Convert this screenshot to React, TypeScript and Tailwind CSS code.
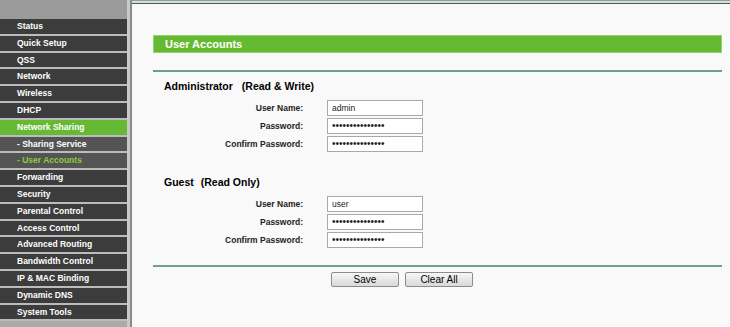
const menu = [
  { label: 'Status' },
  { label: 'Quick Setup' },
  { label: 'QSS' },
  { label: 'Network' },
  { label: 'Wireless' },
  { label: 'DHCP' },
  { label: 'Network Sharing', active: true },
  { label: '- Sharing Service', sub: true },
  { label: '- User Accounts', sub: true, current: true },
  { label: 'Forwarding' },
  { label: 'Security' },
  { label: 'Parental Control' },
  { label: 'Access Control' },
  { label: 'Advanced Routing' },
  { label: 'Bandwidth Control' },
  { label: 'IP & MAC Binding' },
  { label: 'Dynamic DNS' },
  { label: 'System Tools' },
];

const DOTS = '•••••••••••••••';

function Field({ label, value, secret }: { label: string; value: string; secret?: boolean }) {
  return (
    <div className="flex h-[16px] items-center">
      <div className="w-[150px] text-right text-[8.5px] font-bold text-[#222]">{label}</div>
      <div className="ml-[24px] flex h-[16px] w-[96px] items-center border border-[#a9a9a9] bg-white pl-[4px]">
        <span className={secret ? 'text-[10px] leading-none text-[#222]' : 'text-[8.5px] leading-none text-[#222]'}>
          {secret ? DOTS : value}
        </span>
      </div>
    </div>
  );
}

function Section({ title, note, gap, user }: { title: string; note: string; gap: string; user: string }) {
  return (
    <>
      <div className="flex h-[14px] items-center pl-[11px] text-[10.5px] font-bold text-black">
        <span>{title}</span>
        <span className={gap}>{note}</span>
      </div>
      <div className="mt-[6px] flex flex-col gap-[2px]">
        <Field label="User Name:" value={user} />
        <Field label="Password:" value="" secret />
        <Field label="Confirm Password:" value="" secret />
      </div>
    </>
  );
}

export default function App() {
  return (
    <div className="flex h-[327px] w-[730px] overflow-hidden bg-[#f9f9f9] font-['Liberation_Sans',Arial,sans-serif]">
      <div className="flex w-[127px] flex-col bg-[#9b9b9b] pt-[19px]">
        <div className="flex flex-col bg-[#bcbcbc]">
          {menu.map((m) => (
            <div
              key={m.label}
              className={
                'flex h-[14.8px] items-center pl-[17px] text-[8.5px] font-bold mb-[2px] ' +
                (m.active
                  ? 'bg-[#66b933] text-white'
                  : m.sub
                    ? m.current
                      ? 'bg-[#545454] text-[#8ccc3c]'
                      : 'bg-[#545454] text-white'
                    : 'bg-[#3c3c3c] text-white')
              }
            >
              {m.label}
            </div>
          ))}
        </div>
        <div className="flex-1 bg-[#ababab]" />
      </div>
      <div className="w-[3px] bg-[#c9c9c9]" />
      <div className="w-[2px] bg-[#8a8a8a]" />
      <div className="flex flex-1 flex-col">
        <div className="h-px bg-[#7fa98a]" />
        <div className="h-[2px] bg-[#dcdcdc]" />
        <div className="h-px bg-[#555]" />
        <div className="flex flex-col pl-[21px] pr-[8px]">
          <div className="mt-[31px] flex h-[18px] items-center border border-[#8fd36a] bg-[#66b933] pl-[11px] text-[11px] font-bold text-white">
            User Accounts
          </div>
          <div className="mt-[17px] h-[2px] bg-[#6e9f8e]" />
          <div className="mt-[8px]">
            <Section title="Administrator" note="(Read & Write)" gap="ml-[9px]" user="admin" />
          </div>
          <div className="mt-[24px]">
            <Section title="Guest" note="(Read Only)" gap="ml-[7px]" user="user" />
          </div>
          <div className="mt-[17px] h-[2px] bg-[#6e9f8e]" />
          <div className="mt-[5px] flex gap-[6px] pl-[178px]">
            <button className="h-[15px] w-[68px] rounded-[2px] border border-[#8c8c8c] bg-gradient-to-b from-[#f7f7f7] to-[#d9d9d9] text-[10px] leading-none text-black">
              Save
            </button>
            <button className="h-[15px] w-[68px] rounded-[2px] border border-[#8c8c8c] bg-gradient-to-b from-[#f7f7f7] to-[#d9d9d9] text-[10px] leading-none text-black">
              Clear All
            </button>
          </div>
        </div>
      </div>
    </div>
  );
}
